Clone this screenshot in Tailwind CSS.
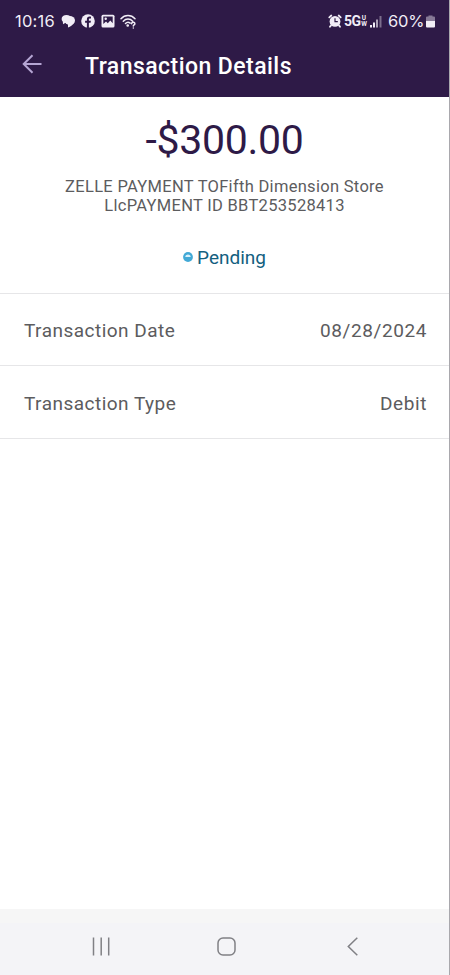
<!DOCTYPE html>
<html lang="en">
<head>
    <meta charset="UTF-8">
    <meta name="viewport" content="width=device-width, initial-scale=1.0">
    <title>Transaction Details</title>
    <script src="https://cdn.jsdelivr.net/npm/@tailwindcss/browser@4"></script>
</head>
<body class="bg-white font-[Roboto,sans-serif] text-[#5c5c5e]">
    <div class="flex flex-col h-[975px] w-[450px] border-r border-[#a9a8ad] overflow-hidden">
        <header class="h-[97px] shrink-0 bg-[#2e1a47] text-white">
            <!-- Status bar -->
            <div class="flex items-center h-[42px] pl-[15px] pr-[14px] text-[#f1edf6]">
                <span class="font-[Inter,sans-serif] text-[16.500px] leading-5 tracking-[0.200px] w-[40px] whitespace-nowrap">10:16</span>
                <svg class="ml-[6px]" width="15" height="14" viewBox="0 0 15 14" fill="currentColor">
                    <ellipse cx="5.500" cy="4.900" rx="4.900" ry="4"/>
                    <path d="M1.800 6.500 2 10.200l3-1.700z"/>
                    <ellipse cx="8.700" cy="6.400" rx="5.300" ry="4.400"/>
                    <path d="M7 9.500v4c2.300-.8 5.300-2.700 6.500-5.500z"/>
                </svg>
                <svg class="ml-[5px]" width="14" height="14" viewBox="0 0 14 14">
                    <circle cx="7" cy="7" r="6.800" fill="currentColor"/>
                    <path d="M5.900 14V8.700H4.100V6.700h1.800V5.300c0-1.800 1-2.700 2.600-2.700.6 0 1.200.1 1.500.2v1.700H9c-.8 0-1.100.4-1.100 1v1.200h2l-.3 2H7.900V14z" fill="#2e1a47"/>
                </svg>
                <svg class="ml-[6px]" width="14" height="14" viewBox="0 0 14 14">
                    <rect x=".5" y=".7" width="13" height="12.800" rx="1.500" fill="currentColor"/>
                    <path d="M2.300 2.500h9.400v6.700L9.300 6.500 6.800 9.200 5 7.500 2.300 10z" fill="#2e1a47"/>
                    <circle cx="4.700" cy="4.700" r="1.200" fill="currentColor"/>
                </svg>
                <svg class="ml-[5px]" width="17" height="15" viewBox="0 0 17 15" fill="none" stroke="currentColor" stroke-width="1.500" stroke-linecap="round">
                    <path d="M1 4.700C4.800.5 11.200.5 15 4.700M3.300 7.200c2.700-2.800 6.700-2.800 9.400 0M5.500 9.500c1.400-1.500 3.200-1.600 4.700-.4"/>
                    <circle cx="7.700" cy="11.500" r=".6" fill="currentColor"/>
                    <path d="M11.600 9.700c0-2 3.300-1.800 3.300 0 0 1.200-1.600 1.200-1.600 2.300"/>
                    <path d="M13.300 14v.1"/>
                </svg>

                <svg class="ml-auto" width="14" height="14" viewBox="0 0 14 14">
                    <path d="M1.300 3.300 3.300 1.500M12.700 3.300l-2-1.800M3 11.500l-1 1.200M11 11.500l1 1.200" stroke="currentColor" stroke-width="1.800" stroke-linecap="round"/>
                    <circle cx="7" cy="7.400" r="5.400" fill="currentColor"/>
                    <path d="M7 4.300v3.300h2.800" fill="none" stroke="#2e1a47" stroke-width="1.200"/>
                </svg>
                <span class="ml-[2px] w-[17px] text-[14px] leading-5 font-bold tracking-[-0.600px]">5G</span>
                <span class="w-[6px] flex flex-col items-center text-[6.500px] leading-[6.500px] font-bold"><span>U</span><span>W</span></span>
                <svg class="ml-[3px]" width="12" height="13" viewBox="0 0 12 13" fill="currentColor">
                    <rect x="0" y="10" width="2" height="2.500"/>
                    <rect x="3" y="7.500" width="2" height="5"/>
                    <rect x="6" y="4.500" width="2" height="8" opacity=".65"/>
                    <rect x="9.500" y="1" width="2" height="11.500" opacity=".4"/>
                </svg>
                <span class="ml-[6px] w-[36px] font-[Inter,sans-serif] text-[16.500px] leading-5 tracking-[-0.200px] whitespace-nowrap">60%</span>
                <svg class="ml-[2px]" width="9" height="13" viewBox="0 0 9 13" fill="currentColor">
                    <path d="M2.500 1.500V.5h4v1H8a1 1 0 0 1 1 1V6H0V2.500a1 1 0 0 1 1-1z" opacity=".45"/>
                    <path d="M0 6h9v5.500a1 1 0 0 1-1 1H1a1 1 0 0 1-1-1z"/>
                </svg>
            </div>
            <!-- App bar -->
            <div class="flex items-center h-[46px] pl-[22px]">
                <svg class="mb-[2px]" width="20" height="20" viewBox="0 0 20 20" fill="none" stroke="#b5a5d3" stroke-width="2">
                    <path d="M19.500 10H2M10.500 1.200 1.700 10l8.800 8.800"/>
                </svg>
                <h1 class="ml-[43px] pt-[5px] text-[23px] font-medium tracking-[0.450px] whitespace-nowrap">Transaction Details</h1>
            </div>
        </header>

        <main class="flex-1">
            <section class="h-[197px] border-b border-[#e6e6e8] text-center">
                <p class="pt-[18px] text-[41px] leading-[50px] tracking-[-0.300px] text-[#2e1a47]">-$300.00</p>
                <p class="mt-[12px] text-[16.500px] leading-[19px] tracking-[0.300px]">ZELLE PAYMENT TOFifth Dimension Store<br>LlcPAYMENT ID BBT253528413</p>
                <div class="mt-[31px] flex items-center justify-center gap-[4px] text-[19px] leading-6 text-[#13607f]">
                    <svg class="mb-[3px]" width="10" height="10" viewBox="0 0 10 10">
                        <circle cx="5" cy="5" r="4.900" fill="#42a9d6"/>
                        <path d="M2.300 5a2.700 2.500 0 0 1 5.400 0z" fill="#d8f1fb"/>
                    </svg>
                    <span>Pending</span>
                </div>
            </section>
            <div class="flex items-center justify-between h-[72px] pt-[3px] pl-6 pr-[22px] border-b border-[#e6e6e8] text-[19px]">
                <span class="tracking-[0.480px]">Transaction Date</span>
                <span class="tracking-[0.600px]">08/28/2024</span>
            </div>
            <div class="flex items-center justify-between h-[73px] pt-[4px] pl-6 pr-[22px] border-b border-[#e6e6e8] text-[19px]">
                <span class="tracking-[0.480px]">Transaction Type</span>
                <span class="tracking-[0.600px]">Debit</span>
            </div>
        </main>

        <!-- Navigation bar -->
        <nav class="h-[66px] shrink-0 bg-[#f4f4f7] border-t-[14px] border-[#f6f6f6] text-[#808085]">
            <div class="flex items-center h-[46px] pl-[92px]">
                <svg width="18" height="19" viewBox="0 0 18 19" stroke="currentColor" stroke-width="1.500">
                    <path d="M1.500.5v18M9.200.5v18M16.700.5v18"/>
                </svg>
                <svg class="ml-[107px]" width="19" height="19" viewBox="0 0 19 19" fill="none" stroke="currentColor" stroke-width="1.500">
                    <rect x="1" y="1" width="17" height="17" rx="5"/>
                </svg>
                <svg class="ml-[111px]" width="11" height="19" viewBox="0 0 11 19" fill="none" stroke="currentColor" stroke-width="1.500">
                    <path d="M10.300.8 1.300 9.500l9 8.800"/>
                </svg>
            </div>
        </nav>
    </div>
</body>
</html>
